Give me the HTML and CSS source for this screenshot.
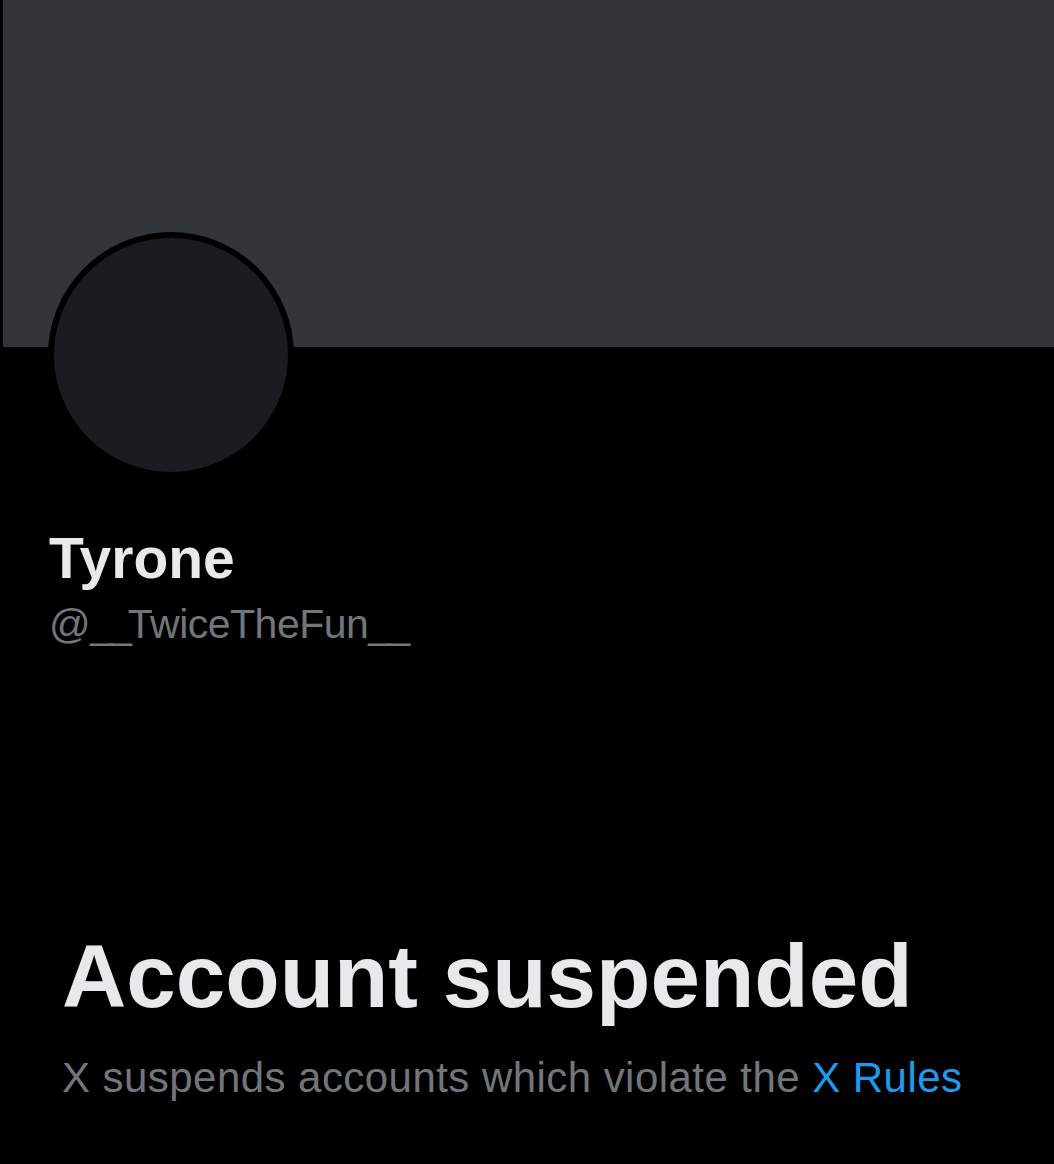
FILE: index.html
```html
<!DOCTYPE html>
<html>
<head>
<meta charset="utf-8">
<link rel="stylesheet" href="styles.css">
</head>
<body>
<div class="page">
  <div class="banner"></div>
  <div class="profile">
    <div class="avatar"></div>
    <div class="name">Tyrone</div>
    <div class="handle">@<span class="us">__</span>TwiceTheFun<span class="us">__</span></div>
  </div>
  <div class="notice">
    <h1 class="title">Account suspended</h1>
    <p class="desc">X suspends accounts which violate the <a class="link" href="#">X Rules</a></p>
  </div>
</div>
</body>
</html>
```
FILE: styles.css
```css
html, body {
  margin: 0;
  padding: 0;
  background: #000;
}
body {
  font-family: "Liberation Sans", Arial, sans-serif;
  width: 1054px;
  height: 1164px;
  overflow: hidden;
}
.page {
  display: flex;
  flex-direction: column;
}
.banner {
  height: 347px;
  margin-left: 3px;
  background: #333639;
}
.profile {
  padding-left: 48px;
  display: flex;
  flex-direction: column;
  align-items: flex-start;
}
.avatar {
  width: 234px;
  height: 234px;
  border: 6px solid #000;
  border-radius: 50%;
  background: #1a1c1f;
  margin-top: -115px;
}
.name {
  margin-top: 46px;
  font-size: 57px;
  line-height: 68px;
  font-weight: 700;
  color: #e7e9ea;
  padding-left: 1px;
}
.handle {
  margin-top: 7px;
  font-size: 41px;
  line-height: 50px;
  letter-spacing: -0.5px;
  color: #71767b;
  padding-left: 1px;
}
.us {
  letter-spacing: -4px;
}
.notice {
  padding-left: 62px;
  margin-top: 277px;
}
.title {
  margin: 0;
  font-size: 89px;
  line-height: 100px;
  font-weight: 700;
  color: #e7e9ea;
}
.desc {
  margin: 27px 0 0;
  font-size: 42px;
  line-height: 50px;
  letter-spacing: 0.45px;
  color: #71767b;
}
.link {
  color: #1d9bf0;
  text-decoration: none;
}
```
